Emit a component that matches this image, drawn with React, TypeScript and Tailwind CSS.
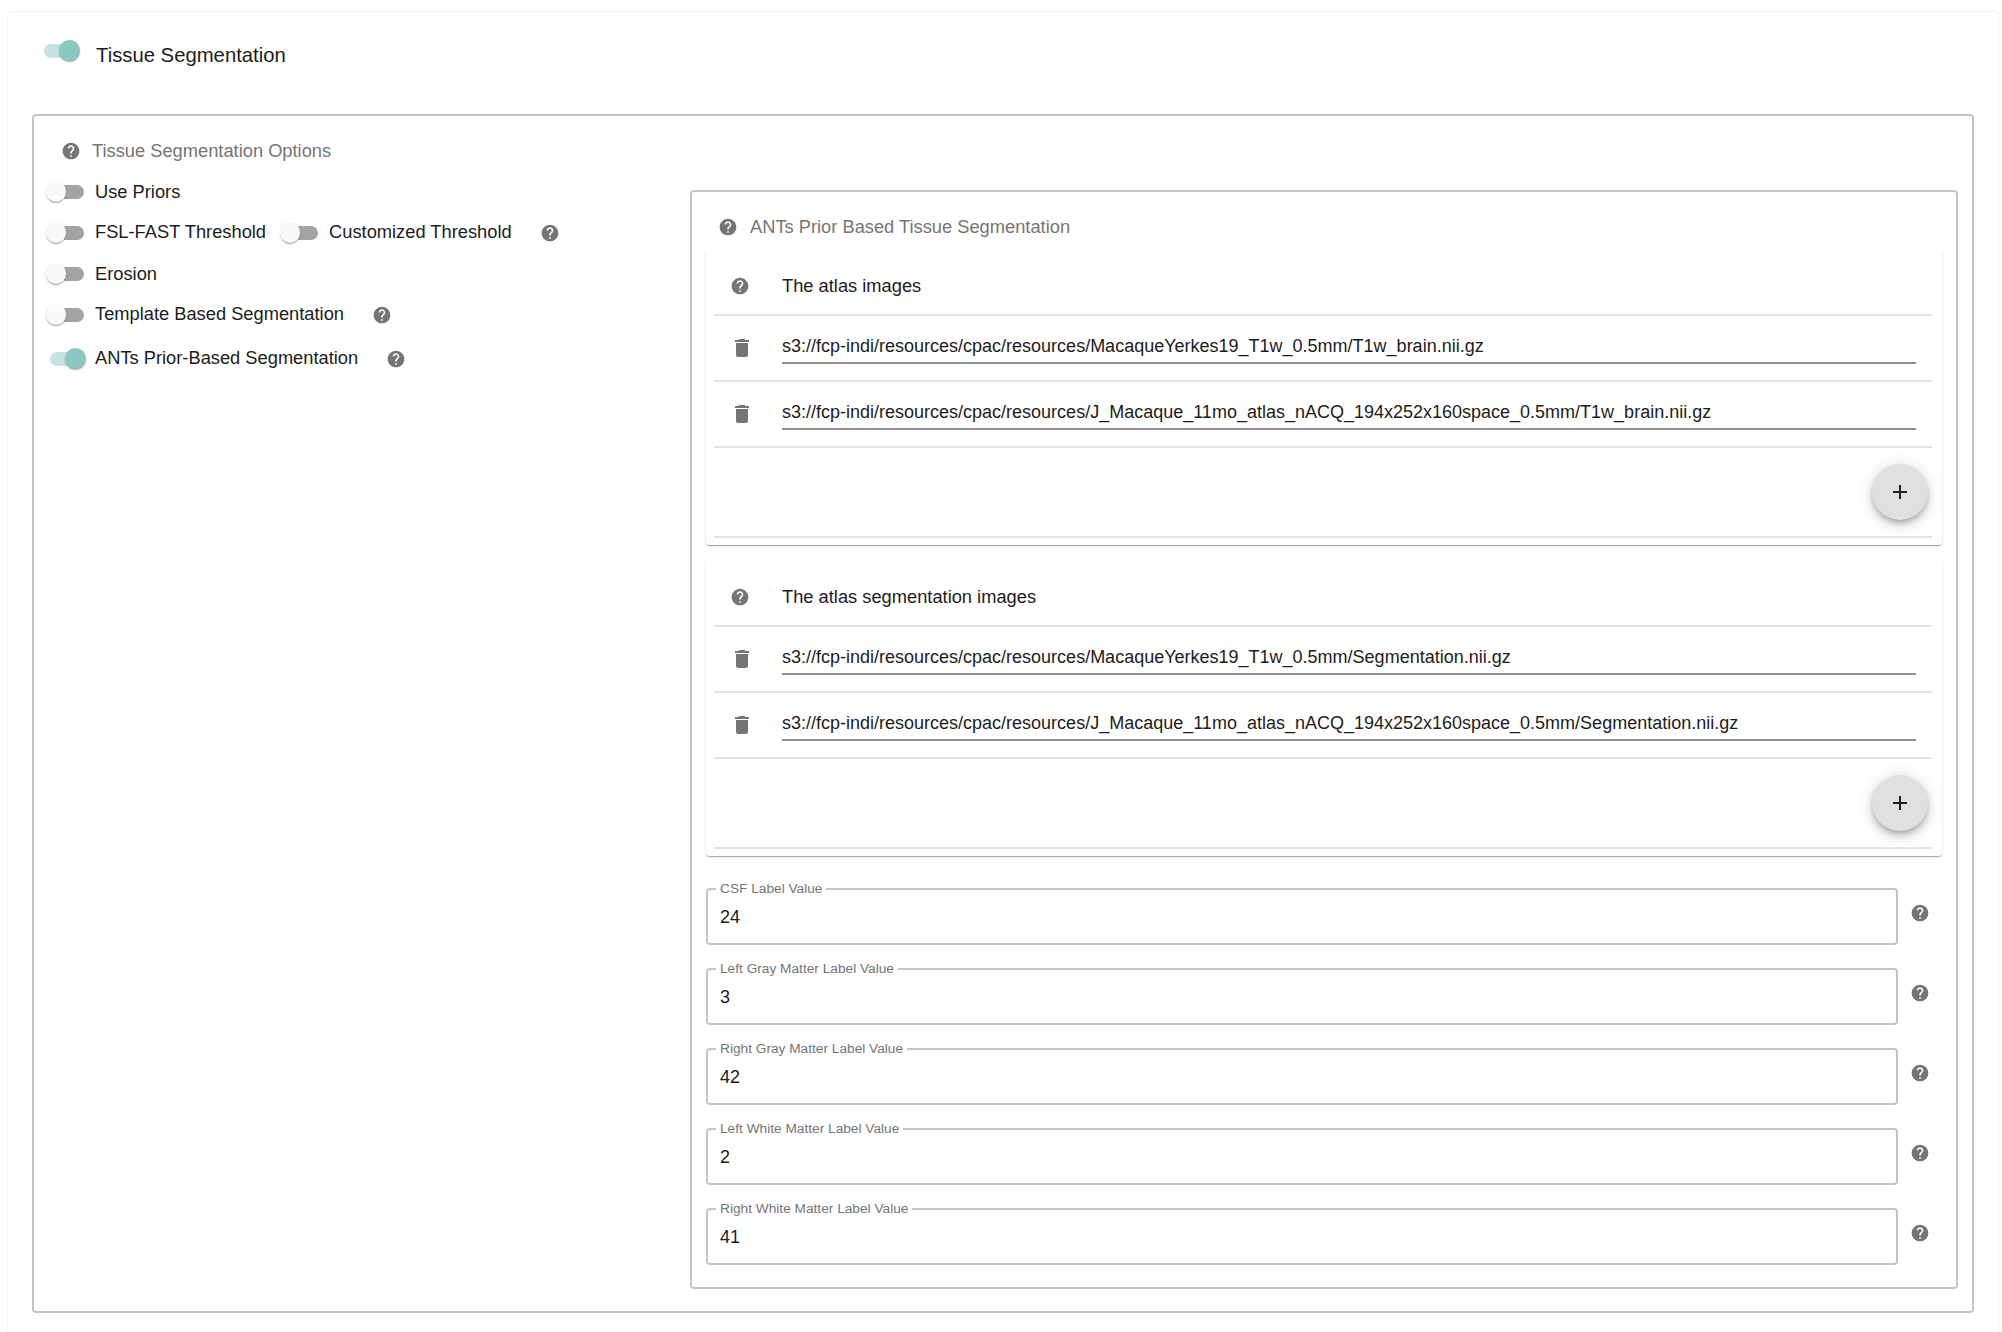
const FONT = "font-['Liberation_Sans',Arial,sans-serif]";

function Help({ className = "" }: { className?: string }) {
  return (
    <svg viewBox="0 0 24 24" className={`block h-5 w-5 shrink-0 fill-[#757575] ${className}`}>
      <path d="M12 2C6.48 2 2 6.48 2 12s4.48 10 10 10 10-4.48 10-10S17.52 2 12 2zm1 17h-2v-2h2v2zm2.07-7.75l-.9.92C13.45 12.9 13 13.5 13 15h-2v-.5c0-1.1.45-2.1 1.17-2.83l1.24-1.26c.37-.36.59-.86.59-1.41 0-1.1-.9-2-2-2s-2 .9-2 2H8c0-2.21 1.79-4 4-4s4 1.79 4 4c0 .88-.36 1.68-.93 2.25z" />
    </svg>
  );
}

function Trash() {
  return (
    <svg viewBox="0 0 24 24" className="block h-6 w-6 shrink-0 fill-[#757575]">
      <path d="M6 19c0 1.1.9 2 2 2h8c1.1 0 2-.9 2-2V7H6v12zM19 4h-3.5l-1-1h-5l-1 1H5v2h14V4z" />
    </svg>
  );
}

function Toggle({ on = false }: { on?: boolean }) {
  return on ? (
    <span className="flex h-[21px] w-[36px] shrink-0 items-center">
      <span className="h-[14px] w-[26px] rounded-full bg-[#c6e3e0]" />
      <span className="-ml-[10px] h-[21px] w-[21px] rounded-full bg-[#8cc8c2] shadow-[0_2px_1px_-1px_rgba(0,0,0,0.2),0_1px_1px_0_rgba(0,0,0,0.14),0_1px_3px_0_rgba(0,0,0,0.12)]" />
    </span>
  ) : (
    <span className="flex h-[21px] w-[38px] shrink-0 items-center">
      <span className="z-10 h-[21px] w-[20px] shrink-0 rounded-full bg-[#fafafa] shadow-[0_2px_1px_-1px_rgba(0,0,0,0.2),0_1px_1px_0_rgba(0,0,0,0.14),0_1px_3px_0_rgba(0,0,0,0.12)]" />
      <span className="-ml-[2px] h-[14px] w-[20px] shrink-0 rounded-r-full bg-[#a3a3a3]" />
    </span>
  );
}

function Divider() {
  return <div className="ml-[8px] mr-[10px] h-[2px] bg-[#e3e3e3]" />;
}

function PathRow({ value }: { value: string }) {
  return (
    <>
      <div className="flex h-[64px] items-start">
        <span className="ml-[24px] mt-[20px] w-[52px]">
          <Trash />
        </span>
        <div className="mt-[14px] mr-[26px] flex h-[34px] flex-1 items-center border-b-2 border-[#8f8f8f] text-[18px] text-[#1c1c1c]">
          {value}
        </div>
      </div>
      <Divider />
    </>
  );
}

function ListCard({ title, values }: { title: string; values: string[] }) {
  return (
    <div className="mb-[15px] rounded-[4px] bg-white shadow-[0_2px_1px_-1px_rgba(0,0,0,0.2),0_1px_1px_0_rgba(0,0,0,0.14),0_1px_3px_0_rgba(0,0,0,0.12)]">
      <div className="flex h-[65px] items-center pt-[9px]">
        <Help className="ml-[24px] mr-[32px]" />
        <span className="text-[18.3px] text-[#1c1c1c]">{title}</span>
      </div>
      <Divider />
      {values.map((v) => (
        <PathRow key={v} value={v} />
      ))}
      <div className="flex h-[88px] items-center justify-end pr-[14px]">
        <div className="flex h-[56px] w-[56px] items-center justify-center rounded-full bg-[#e0e0e0] shadow-[0_3px_5px_-1px_rgba(0,0,0,0.2),0_6px_10px_0_rgba(0,0,0,0.14),0_1px_18px_0_rgba(0,0,0,0.12)]">
          <svg viewBox="0 0 24 24" className="block h-6 w-6 fill-[#1f1f1f]">
            <path d="M19 13h-6v6h-2v-6H5v-2h6V5h2v6h6v2z" />
          </svg>
        </div>
      </div>
      <Divider />
      <div className="h-[7px]" />
    </div>
  );
}

function Field({ label, value }: { label: string; value: string }) {
  return (
    <div className="mb-[23px] flex items-center">
      <div className="relative flex h-[57px] w-[1192px] items-center rounded-[4px] border-2 border-[#c4c4c4] px-[12px] pt-[2px] text-[18px] text-[#1c1c1c]">
        {value}
        <span className="absolute -top-[9px] left-[8px] bg-white px-[4px] text-[13.7px] leading-[16px] text-[#757575]">
          {label}
        </span>
      </div>
      <Help className="ml-[12px] -mt-[7px]" />
    </div>
  );
}

function OptionRow({ className = "", children }: { className?: string; children: React.ReactNode }) {
  return (
    <div className={`flex items-center text-[18.3px] leading-[21px] text-[#1c1c1c] ${className}`}>{children}</div>
  );
}

export default function App() {
  return (
    <div className={`${FONT} h-[1332px] overflow-hidden bg-white pl-[7px] pr-[3px] pt-[11px]`}>
      <div className="h-[1340px] rounded-[4px] border border-[#f3f3f3] bg-white">
        <div className="flex h-[103px] items-start pl-[36px] pt-[28px]">
          <Toggle on />
          <span className="ml-[16px] mt-[3px] text-[20.3px] leading-[24px] text-[#1c1c1c]">Tissue Segmentation</span>
        </div>
        <div className="-mt-[1px] ml-[24px] flex h-[1199px] w-[1942px] rounded-[4px] border-2 border-[#c4c4c4]">
          <div className="w-[656px] shrink-0 pl-[12px]">
            <div className="mt-[24px] flex items-center pl-[15px]">
              <Help />
              <span className="ml-[11px] text-[18.3px] leading-[22px] text-[#757575]">Tissue Segmentation Options</span>
            </div>
            <OptionRow className="mt-[19px]">
              <Toggle />
              <span className="ml-[11px]">Use Priors</span>
            </OptionRow>
            <OptionRow className="mt-[20px]">
              <Toggle />
              <span className="-mt-[3px] ml-[11px]">FSL-FAST Threshold</span>
              <span className="ml-[14px]">
                <Toggle />
              </span>
              <span className="-mt-[3px] ml-[11px]">Customized Threshold</span>
              <Help className="ml-[28px]" />
            </OptionRow>
            <OptionRow className="mt-[20px]">
              <Toggle />
              <span className="-mt-[1px] ml-[11px]">Erosion</span>
            </OptionRow>
            <OptionRow className="mt-[20px]">
              <Toggle />
              <span className="-mt-[3px] ml-[11px]">Template Based Segmentation</span>
              <Help className="ml-[28px]" />
            </OptionRow>
            <OptionRow className="mt-[23px] pl-[4px]">
              <Toggle on />
              <span className="-mt-[3px] ml-[9px]">ANTs Prior-Based Segmentation</span>
              <Help className="ml-[28px]" />
            </OptionRow>
          </div>
          <div className="mt-[74px] h-[1099px] w-[1268px] shrink-0 rounded-[4px] border-2 border-[#c4c4c4] pl-[14px] pr-[14px]">
            <div className="flex h-[57px] items-center pl-[12px] pt-[12px]">
              <Help />
              <span className="ml-[12px] text-[18.3px] text-[#757575]">ANTs Prior Based Tissue Segmentation</span>
            </div>
            <ListCard
              title="The atlas images"
              values={[
                "s3://fcp-indi/resources/cpac/resources/MacaqueYerkes19_T1w_0.5mm/T1w_brain.nii.gz",
                "s3://fcp-indi/resources/cpac/resources/J_Macaque_11mo_atlas_nACQ_194x252x160space_0.5mm/T1w_brain.nii.gz",
              ]}
            />
            <ListCard
              title="The atlas segmentation images"
              values={[
                "s3://fcp-indi/resources/cpac/resources/MacaqueYerkes19_T1w_0.5mm/Segmentation.nii.gz",
                "s3://fcp-indi/resources/cpac/resources/J_Macaque_11mo_atlas_nACQ_194x252x160space_0.5mm/Segmentation.nii.gz",
              ]}
            />
            <div className="h-[17px]" />
            <Field label="CSF Label Value" value="24" />
            <Field label="Left Gray Matter Label Value" value="3" />
            <Field label="Right Gray Matter Label Value" value="42" />
            <Field label="Left White Matter Label Value" value="2" />
            <Field label="Right White Matter Label Value" value="41" />
          </div>
        </div>
      </div>
    </div>
  );
}
